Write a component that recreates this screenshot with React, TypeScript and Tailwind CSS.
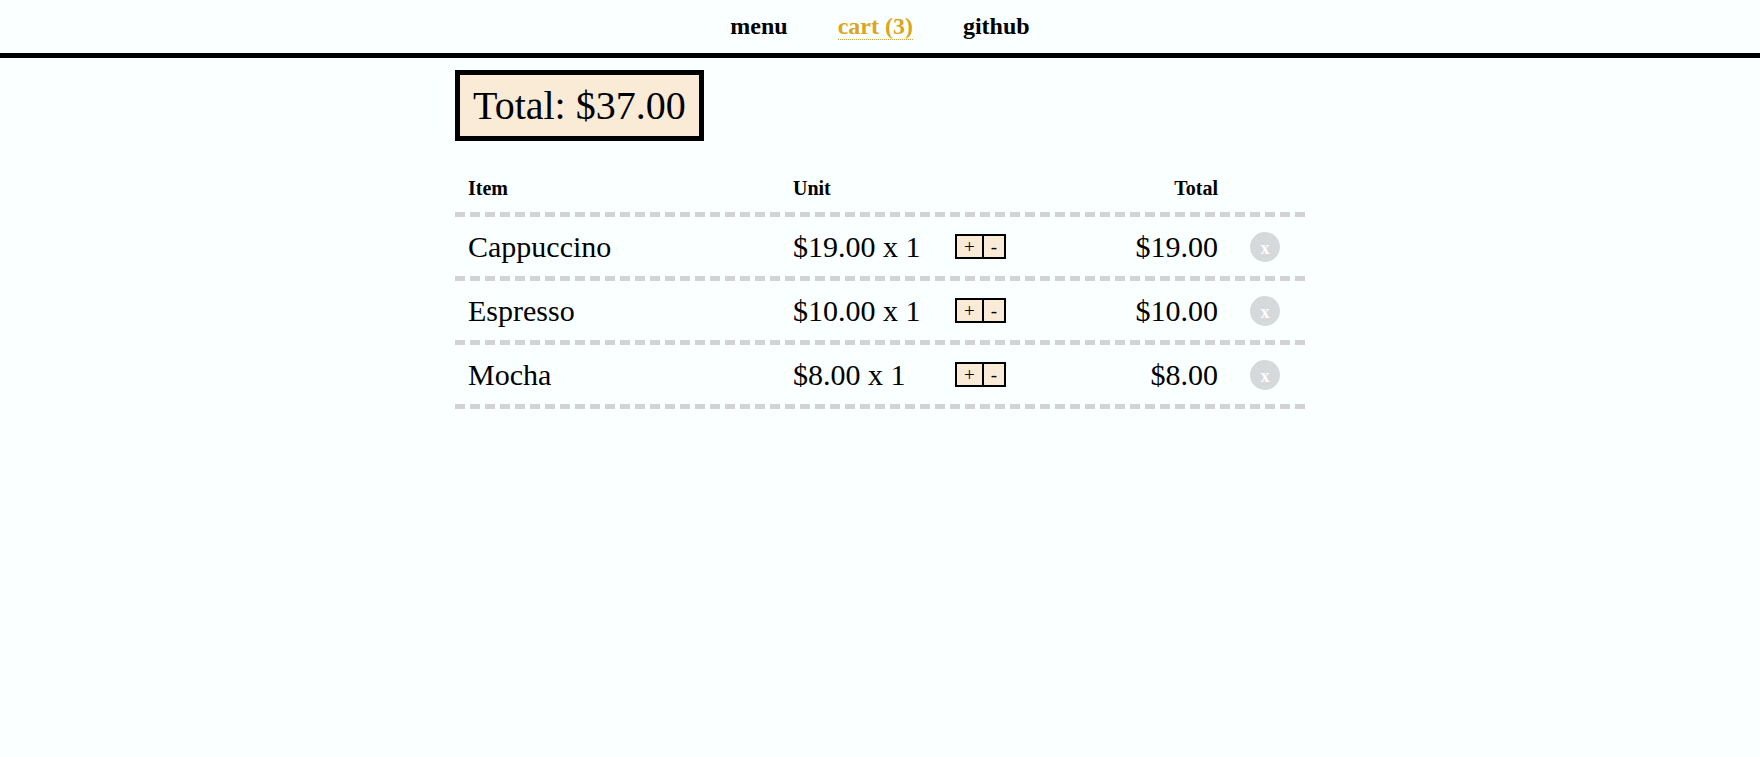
import { useState } from "react";

type CartItem = { name: string; price: number; quantity: number };

const initialItems: CartItem[] = [
  { name: "Cappuccino", price: 19, quantity: 1 },
  { name: "Espresso", price: 10, quantity: 1 },
  { name: "Mocha", price: 8, quantity: 1 },
];

const money = (value: number) => `$${value.toFixed(2)}`;

const rowClass =
  "grid grid-cols-[325fr_162fr_100fr_163fr_87px] items-center border-b-5 border-dashed border-[#d3d3d3] pl-[13px]";

function NavBar({ count }: { count: number }) {
  return (
    <nav className="border-b-5 border-black pt-3 pb-[13px]">
      <ul className="flex justify-center gap-[50px] text-2xl leading-7 font-bold">
        <li>
          <a href="#menu">menu</a>
        </li>
        <li>
          <a
            href="#cart"
            aria-current="page"
            className="border-b border-dotted border-[#daa520] text-[#daa520]"
          >
            {`cart (${count})`}
          </a>
        </li>
        <li>
          <a href="#github">github</a>
        </li>
      </ul>
    </nav>
  );
}

export default function App() {
  const [items, setItems] = useState(initialItems);

  const change = (name: string, delta: number) =>
    setItems((current) =>
      current
        .map((item) =>
          item.name === name ? { ...item, quantity: item.quantity + delta } : item,
        )
        .filter((item) => item.quantity > 0),
    );

  const remove = (name: string) =>
    setItems((current) => current.filter((item) => item.name !== name));

  const count = items.reduce((sum, item) => sum + item.quantity, 0);
  const total = items.reduce((sum, item) => sum + item.price * item.quantity, 0);

  return (
    <div className="min-h-screen bg-[#faffff] font-['Liberation_Serif',serif] text-black">
      <NavBar count={count} />
      <main className="mx-auto max-w-[850px] pt-3">
        <p className="w-fit border-5 border-black bg-[#faebd7] px-[13px] py-2 text-[40px] leading-[45px]">
          {`Total: ${money(total)}`}
        </p>
        <table className="mt-[23px] block">
          <thead className="block">
            <tr className={`${rowClass} py-3 text-left text-xl leading-6`}>
              <th scope="col">Item</th>
              <th scope="col">Unit</th>
              <td />
              <th scope="col" className="text-right">
                Total
              </th>
              <td />
            </tr>
          </thead>
          <tbody className="block">
            {items.map(({ name, price, quantity }) => (
              <tr key={name} className={`${rowClass} h-16 text-[30px] leading-[34px]`}>
                <td>{name}</td>
                <td>{`${money(price)} x ${quantity}`}</td>
                <td className="flex text-[19px] leading-[21px]">
                  <div className="flex border-2 border-black bg-[#faebd7]">
                    <button
                      type="button"
                      aria-label={`Add one ${name}`}
                      className="border-r-2 border-black px-[7px]"
                      onClick={() => change(name, 1)}
                    >
                      +
                    </button>
                    <button
                      type="button"
                      aria-label={`Remove one ${name}`}
                      className="px-[7px]"
                      onClick={() => change(name, -1)}
                    >
                      -
                    </button>
                  </div>
                </td>
                <td className="text-right">{money(price * quantity)}</td>
                <td className="flex pl-8">
                  <button
                    type="button"
                    aria-label={`Remove all ${name}`}
                    className="size-[30px] rounded-full bg-[#d6d9db] text-lg leading-8 font-bold text-white"
                    onClick={() => remove(name)}
                  >
                    x
                  </button>
                </td>
              </tr>
            ))}
          </tbody>
        </table>
      </main>
    </div>
  );
}
